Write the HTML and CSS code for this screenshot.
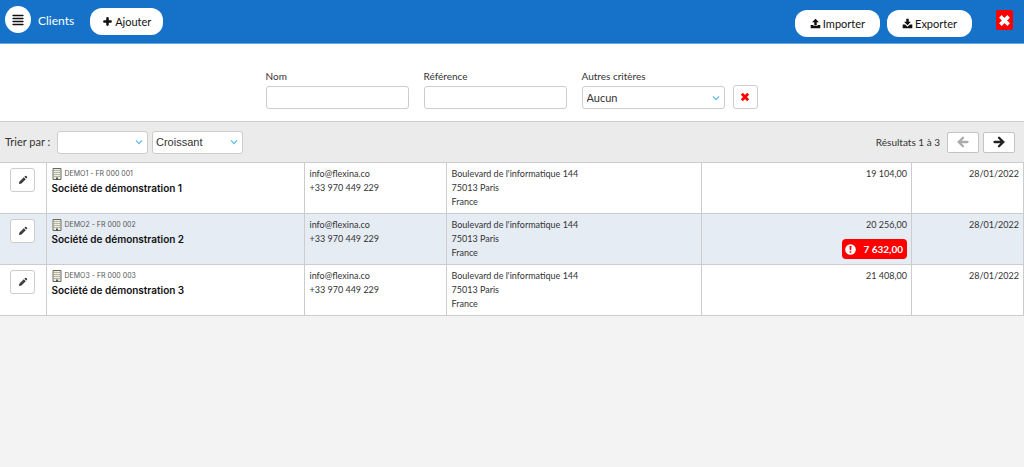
FILE: index.html
```html
<!DOCTYPE html>
<html lang="fr">
<head>
<meta charset="utf-8">
<meta name="viewport" content="width=device-width, initial-scale=1">
<title>Clients</title>
<link rel="stylesheet" href="styles.css">
</head>
<body>
<svg class="sprite" aria-hidden="true">
  <symbol id="menu" viewBox="0 0 12 12"><path d="M1 1.5h10M1 4.5h10M1 7.5h10M1 10.5h10" stroke="currentColor" stroke-width="1.3" stroke-linecap="round"/></symbol>
  <symbol id="plus" viewBox="0 0 12 12"><path d="M6 2.6v6.8M2.6 6h6.8" stroke="currentColor" stroke-width="2.8" stroke-linecap="round"/></symbol>
  <symbol id="upload" viewBox="0 0 16 16"><path fill="currentColor" d="M8 1 13 6.2H9.8v4.6H6.2V6.2H3zM1 10h4.1v1.8h5.8V10H15v4.8H1z"/></symbol>
  <symbol id="download" viewBox="0 0 16 16"><path fill="currentColor" d="M6.2 1h3.6v4.4H13L8 10.6 3 5.4h3.2zM1 9.6h3.4L8 12.6l3.6-3H15v5.2H1z"/></symbol>
  <symbol id="cross" viewBox="0 0 12 12"><path d="m3.4 3.4 5.2 5.2m0-5.2L3.4 8.6" stroke="currentColor" stroke-width="3.4" stroke-linecap="square"/></symbol>
  <symbol id="chevron" viewBox="0 0 8 8"><path d="m1 2.4 3 3.2 3-3.2" fill="none" stroke="currentColor" stroke-width="1.2"/></symbol>
  <symbol id="arrow" viewBox="0 0 12 12"><path d="M1.5 6h8.6M6 1.7 10.3 6 6 10.3" fill="none" stroke="currentColor" stroke-width="2.3" stroke-linecap="round"/></symbol>
  <symbol id="pencil" viewBox="0 0 12 12"><path fill="currentColor" d="m7.7 2 .9-.8q.7-.6 1.4 0l.8.8q.6.7 0 1.4l-.8.9zM7 2.7l2.3 2.3-5.2 5.2-3 .7.7-3z"/><path d="m3.4 8.3 4-4" stroke="#888" stroke-width=".5"/></symbol>
  <symbol id="building" viewBox="0 0 10 12"><path d="M1 .5h8v11H1z" fill="#eeecdc" stroke="#66685f"/><path d="M2.2 2.5h5.6M2.2 4.5h5.6M2.2 6.5h5.6M2.2 8.5h5.6" stroke="#9a9d90" stroke-dasharray="1.4 .7"/><path d="M4 9.5h2V12H4z" fill="#55574f"/></symbol>
  <symbol id="alert" viewBox="0 0 12 12"><circle cx="6" cy="6" r="5.8" fill="#fff"/><path d="M4.9 2.2h2.2l-.3 4.6H5.2zM5.1 7.8h1.8v1.7H5.1z" fill="#f00"/></symbol>
</svg>

<header class="topbar">
  <button class="menu-button" type="button" aria-label="Menu"><svg class="icon-menu"><use href="#menu"/></svg></button>
  <h1 class="title">Clients</h1>
  <button class="pill pill-add" type="button"><svg class="icon-medium"><use href="#plus"/></svg>Ajouter</button>
  <div class="topbar-actions">
    <button class="pill" type="button"><svg class="icon-medium"><use href="#upload"/></svg>Importer</button>
    <button class="pill" type="button"><svg class="icon-medium"><use href="#download"/></svg>Exporter</button>
  </div>
  <button class="close-button" type="button" aria-label="Fermer"><svg class="icon-large"><use href="#cross"/></svg></button>
</header>

<form class="filters">
  <div class="field"><label for="nom">Nom</label><input class="control" id="nom" type="text"></div>
  <div class="field"><label for="reference">Référence</label><input class="control" id="reference" type="text"></div>
  <div class="field"><label for="criteres">Autres critères</label>
    <span class="select"><select class="control" id="criteres"><option>Aucun</option></select><svg class="chevron"><use href="#chevron"/></svg></span>
  </div>
  <button class="square-button clear-button" type="button" aria-label="Effacer"><svg class="icon-small"><use href="#cross"/></svg></button>
</form>

<section class="toolbar">
  <label class="sort-label" for="tri">Trier par :</label>
  <span class="select select-sort"><select class="control" id="tri"><option></option></select><svg class="chevron"><use href="#chevron"/></svg></span>
  <span class="select select-sort"><select class="control select-order" aria-label="Ordre"><option>Croissant</option></select><svg class="chevron"><use href="#chevron"/></svg></span>
  <div class="pager">
    <span>Résultats 1 à 3</span>
    <button class="page-button" type="button" aria-label="Page précédente" disabled><svg class="icon-arrow icon-back"><use href="#arrow"/></svg></button>
    <button class="page-button" type="button" aria-label="Page suivante"><svg class="icon-arrow"><use href="#arrow"/></svg></button>
  </div>
</section>

<table class="clients">
  <colgroup><col class="col-edit"><col class="col-name"><col class="col-contact"><col class="col-address"><col class="col-amount"><col class="col-date"></colgroup>
  <tbody>
    <tr>
      <td class="edit"><button class="square-button" type="button" aria-label="Modifier"><svg class="icon-small"><use href="#pencil"/></svg></button></td>
      <td><div class="code"><svg class="icon-building"><use href="#building"/></svg>DEMO1 - FR 000 001</div><div class="name">Société de démonstration 1</div></td>
      <td>info@flexina.co<br>+33 970 449 229</td>
      <td>Boulevard de l'informatique 144<br>75013 Paris<br>France</td>
      <td class="number">19 104,00</td>
      <td class="number">28/01/2022</td>
    </tr>
    <tr class="alternate">
      <td class="edit"><button class="square-button" type="button" aria-label="Modifier"><svg class="icon-small"><use href="#pencil"/></svg></button></td>
      <td><div class="code"><svg class="icon-building"><use href="#building"/></svg>DEMO2 - FR 000 002</div><div class="name">Société de démonstration 2</div></td>
      <td>info@flexina.co<br>+33 970 449 229</td>
      <td>Boulevard de l'informatique 144<br>75013 Paris<br>France</td>
      <td class="number">20 256,00<div class="overdue"><svg class="icon-medium"><use href="#alert"/></svg>7 632,00</div></td>
      <td class="number">28/01/2022</td>
    </tr>
    <tr>
      <td class="edit"><button class="square-button" type="button" aria-label="Modifier"><svg class="icon-small"><use href="#pencil"/></svg></button></td>
      <td><div class="code"><svg class="icon-building"><use href="#building"/></svg>DEMO3 - FR 000 003</div><div class="name">Société de démonstration 3</div></td>
      <td>info@flexina.co<br>+33 970 449 229</td>
      <td>Boulevard de l'informatique 144<br>75013 Paris<br>France</td>
      <td class="number">21 408,00</td>
      <td class="number">28/01/2022</td>
    </tr>
  </tbody>
</table>
</body>
</html>
```
FILE: styles.css
```css
* { box-sizing: border-box; }
body { margin: 0; background: #f3f3f3; color: #333; font: 10px/14px Lato, sans-serif; }
button, input, select { font: inherit; color: inherit; }
button { display: flex; align-items: center; justify-content: center; padding: 0; border: 0; }
svg { flex: none; }
.sprite { display: none; }
.icon-menu { width: 12px; height: 12px; }
.icon-small { width: 10px; height: 10px; }
.icon-medium { width: 11px; height: 11px; }
.icon-large { width: 13px; height: 13px; }
.icon-arrow { width: 12px; height: 12px; }
.icon-back { transform: scaleX(-1); }

.topbar { display: flex; align-items: flex-start; height: 44px; padding: 6px 11px 0 5px; background: #1572c8; border-bottom: 1px solid #6aa5dd; }
.menu-button { width: 26px; height: 27px; border-radius: 50%; background: #fff; color: #111; }
.title { margin: 6px 16px 0 7px; color: #fff; font-size: 12px; line-height: 18px; font-weight: 400; }
.pill { gap: 2px; height: 27px; padding: 0 15px; border-radius: 12px; background: #fff; color: #111; font-size: 11px; }
.pill-add { margin-top: 2px; padding: 0 12px; }
.topbar-actions { display: flex; gap: 7px; margin: 4px 24px 0 auto; }
.close-button { width: 17px; height: 20px; margin-top: 4px; border-radius: 2px; background: #f00; color: #fff; }

.filters { display: flex; justify-content: center; align-items: flex-start; height: 77px; padding: 25px 1px 0 0; background: #fff; }
.field { width: 143px; margin-right: 15px; }
.field:nth-child(3) { margin-right: 8px; }
.field label { display: block; margin-bottom: 3px; }
.control { display: block; width: 100%; height: 23px; padding: 0 4px; border: 1px solid #ccc; border-radius: 3px; background: #fff; font-size: 11px; color: #333; }
.select { display: grid; align-items: center; }
.select .control, .select .chevron { grid-area: 1 / 1; }
.select .control { appearance: none; }
.chevron { width: 8px; height: 8px; margin-right: 5px; justify-self: end; color: #5bb9e8; pointer-events: none; }
.square-button { width: 25px; height: 24px; border: 1px solid #ccc; border-radius: 3px; background: #fff; }
.clear-button { margin-top: 16px; color: #f00; }

.toolbar { display: flex; align-items: center; gap: 4px; height: 41px; padding: 0 9px 0 5px; border-top: 1px solid #ccc; background: #ebebeb; }
.sort-label { width: 48px; font-size: 11px; white-space: nowrap; }
.select-sort { width: 91px; }
.select-order { padding: 0 3px; font-family: "Liberation Sans", sans-serif; }
.pager { display: flex; align-items: center; gap: 4px; margin-left: auto; }
.page-button { width: 32px; height: 21px; border: 1px solid #c4c4c4; border-radius: 2px; background: #fff; color: #222; }
.page-button:first-of-type { margin-left: 3px; }
.page-button:disabled { color: #aaa; }

.clients { width: 100%; border-collapse: collapse; table-layout: fixed; background: #fff; font-size: 9px; }
.clients td { height: 51px; padding: 4px 4px 3px 5px; border: 1px solid #ccc; vertical-align: top; }
.clients td:first-child { border-left: 0; }
.clients .edit { padding: 5px 0 0 10px; }
.alternate { background: #e6ecf4; }
.col-edit { width: 46px; }
.col-name { width: 258px; }
.col-contact { width: 142px; }
.col-amount { width: 210px; }
.col-date { width: 112px; }
.code { display: flex; align-items: center; gap: 3px; font-family: Inter, sans-serif; font-size: 7px; color: #555; }
.icon-building { width: 10px; height: 12px; }
.name { font-family: Inter, sans-serif; font-size: 10px; font-weight: 600; color: #111; }
.clients .number { text-align: right; }
.overdue { display: flex; align-items: center; justify-content: space-between; width: 65px; height: 20px; margin: 7px 0 0 auto; padding: 0 4px 0 3px; border-radius: 4px; background: #f00; color: #fff; font-size: 10px; font-weight: 700; }
```
